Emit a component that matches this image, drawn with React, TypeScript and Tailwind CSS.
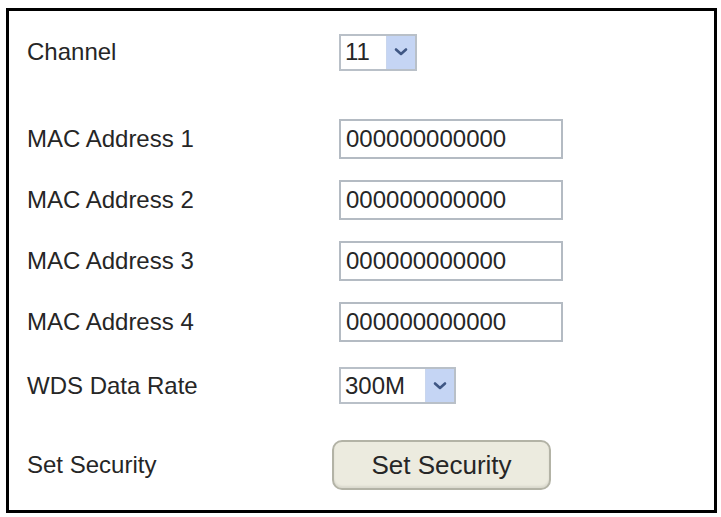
import React from "react";

const font = { fontFamily: '"Liberation Sans", Arial, sans-serif' };

function Chevron() {
  return (
    <svg width="14" height="10" viewBox="0 0 14 10">
      <path d="M2 2.5 L7 7 L12 2.5" fill="none" stroke="#3f5784" strokeWidth="2.6" strokeLinecap="round" strokeLinejoin="round" />
    </svg>
  );
}

function Select({ value, width }: { value: string; width: string }) {
  return (
    <div className={`flex h-[37px] ${width} items-stretch border-2 border-[#b9c0c8] bg-white`}>
      <div className="flex flex-1 items-center pl-[4px] text-[24px] leading-none text-[#262626]">{value}</div>
      <div className="flex w-[29px] items-center justify-center border-l border-[#c9d6ee] bg-[#c5d5f4]">
        <Chevron />
      </div>
    </div>
  );
}

function MacInput() {
  return (
    <div className="flex h-[40px] w-[224px] items-center border-2 border-[#b4bbc3] bg-white pl-[5px] text-[24px] leading-none text-[#262626]">
      000000000000
    </div>
  );
}

function Row({ label, h, children }: { label: string; h: string; children: React.ReactNode }) {
  return (
    <div className={`flex ${h} items-center`}>
      <div className="w-[330px] pl-[18px] text-[24px] leading-none text-[#262626]">{label}</div>
      <div className="flex items-center">{children}</div>
    </div>
  );
}

export default function App() {
  return (
    <div className="h-[517px] w-[721px] bg-white pl-[6px] pt-[8px]" style={font}>
      <div className="flex h-[505px] w-[711px] flex-col border-[3px] border-black pt-[21px]">
        <Row label="Channel" h="h-[40px]">
          <Select value="11" width="w-[78px]" />
        </Row>
        <div className="h-[36px]" />
        <Row label="MAC Address 1" h="h-[61px]">
          <MacInput />
        </Row>
        <Row label="MAC Address 2" h="h-[61px]">
          <MacInput />
        </Row>
        <Row label="MAC Address 3" h="h-[61px]">
          <MacInput />
        </Row>
        <Row label="MAC Address 4" h="h-[61px]">
          <MacInput />
        </Row>
        <div className="h-[3px]" />
        <Row label="WDS Data Rate" h="h-[61px]">
          <Select value="300M" width="w-[117px]" />
        </Row>
        <div className="h-[18px]" />
        <div className="flex h-[61px] items-center">
          <div className="w-[323px] pl-[18px] text-[24px] leading-none text-[#262626]">Set Security</div>
          <button className="flex h-[50px] w-[219px] items-center justify-center rounded-[10px] border-2 border-[#b3b3a6] bg-[#ecebdf] text-[26px] leading-none text-[#262626] shadow-[inset_0_-2px_2px_rgba(0,0,0,0.08)]">
            Set Security
          </button>
        </div>
      </div>
    </div>
  );
}
